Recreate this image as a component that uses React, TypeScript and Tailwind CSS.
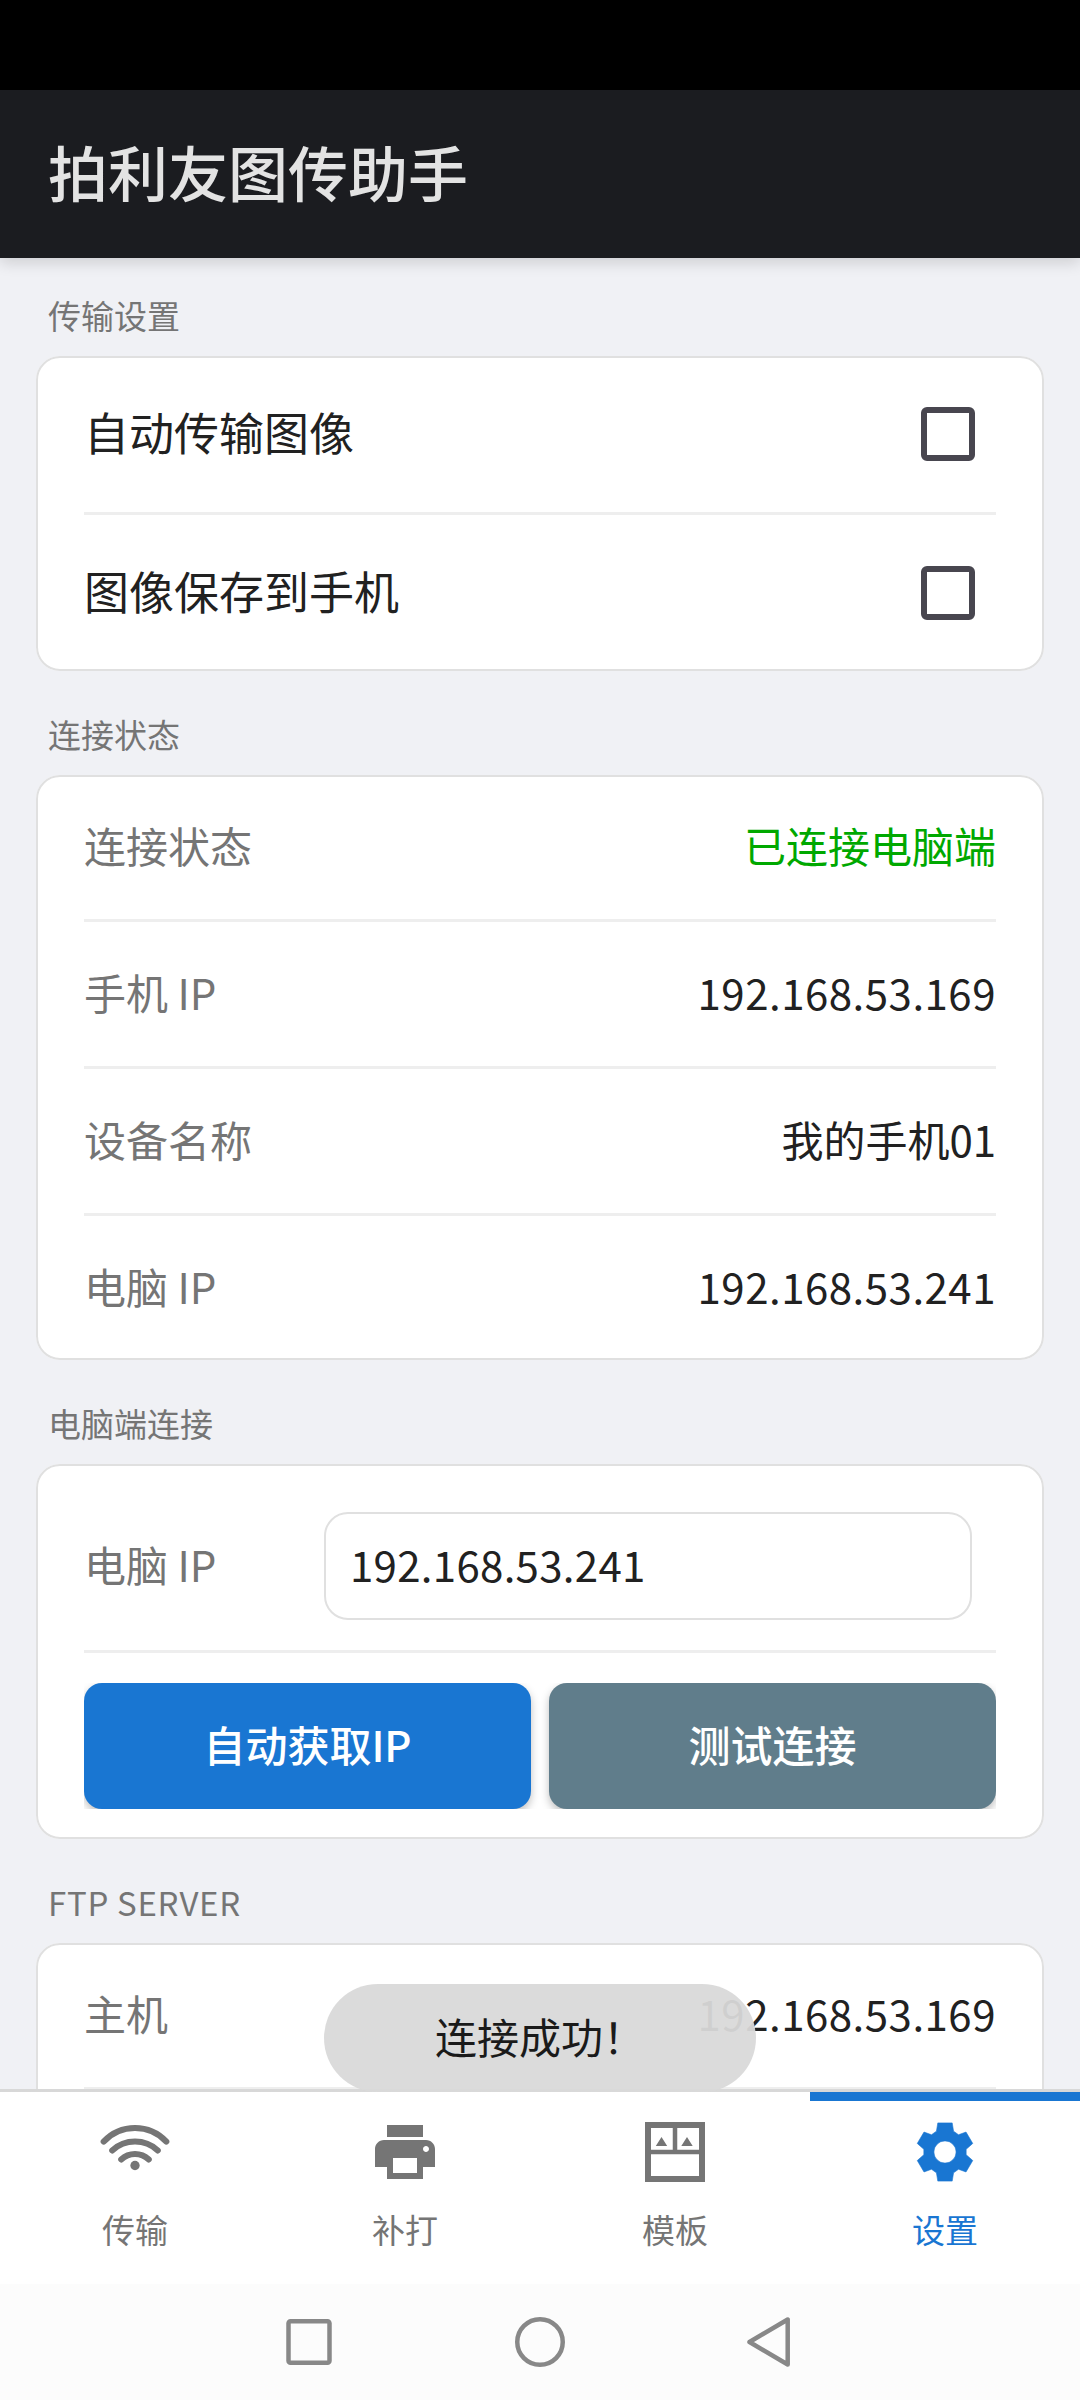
import React from 'react';

const WifiIcon = () => (
  <svg viewBox="0 0 24 24" className="w-[72px] h-[72px]" fill="none" stroke="currentColor" strokeWidth="2" strokeLinecap="round">
    <path d="M1.55 8.55C7.2 2.5 16.8 2.5 22.45 8.55" />
    <path d="M4.4 11.5C8.7 7.55 15.3 7.55 19.6 11.5" />
    <path d="M7.4 14.5C10 12.05 14 12.05 16.6 14.5" />
    <circle cx="12" cy="16.5" r="1.55" fill="currentColor" stroke="none" />
  </svg>
);

const PrintIcon = () => (
  <svg viewBox="0 0 24 24" className="w-[72px] h-[72px]" fill="currentColor">
    <path d="M19 8H5c-1.66 0-3 1.34-3 3v6h4v4h12v-4h4v-6c0-1.66-1.34-3-3-3zm-3 11H8v-5h8v5zm3-7c-.55 0-1-.45-1-1s.45-1 1-1 1 .45 1 1-.45 1-1 1zm-1-9H6v4h12V3z" />
  </svg>
);

const TemplateIcon = () => (
  <svg viewBox="0 0 24 24" className="w-[72px] h-[72px]" fill="currentColor">
    <path d="M2 2h20v20H2zM4 4v7.25h7.25V4zM12.75 4v7.25H20V4zM4 12.75V20h16v-7.25z" fillRule="evenodd" />
    <path d="M5.6 10l1.9-3 1.9 3zM14.1 10l1.9-3 1.9 3z" />
  </svg>
);

const SettingsIcon = () => (
  <svg viewBox="0 0 24 24" className="w-[72px] h-[72px]" fill="currentColor" stroke="currentColor" strokeWidth="0.2" strokeLinejoin="round">
    <path
      fillRule="evenodd"
      d="M9.6 2.3h4.8l.45 2.75 1.65 1.2 2.5-.9 2.25 3.8-2.2 1.95v1.8l2.2 1.95-2.25 3.8-2.5-.9-1.65 1.2-.45 2.75H9.6l-.45-2.75-1.65-1.2-2.5.9-2.25-3.8 2.2-1.95v-1.8l-2.2-1.95L5 5.35l2.5.9 1.65-1.2zM12 8.3a3.7 3.7 0 1 0 0 7.4 3.7 3.7 0 0 0 0-7.4z"
    />
  </svg>
);

const Divider = () => <div className="h-[3px] bg-[#eeeeee]"></div>;

const Section = ({ title, children }: { title: string; children: React.ReactNode }) => (
  <section>
    <h2 className="h-[104px] pt-[39px] pl-3 text-[33px] leading-[48px] text-[#757575]">{title}</h2>
    <div className="relative bg-white rounded-[24px] px-12 after:absolute after:inset-0 after:rounded-[24px] after:border-2 after:border-[#e0e0e0] after:pointer-events-none">
      {children}
    </div>
  </section>
);

const CheckRow = ({ label }: { label: string }) => (
  <div className="h-[156px] flex items-center justify-between pr-[21px]">
    <span className="pb-[5px] text-[45px] leading-none">{label}</span>
    <span className="w-[54px] h-[54px] rounded-[6px] border-6 border-[#48464f]"></span>
  </div>
);

const InfoRow = ({ label, value, valueClass = '' }: { label: string; value: string; valueClass?: string }) => (
  <div className="h-36 flex items-center justify-between pb-[5px] text-[42px] leading-none">
    <span className="text-[#757575]">{label}</span>
    <span className={valueClass}>{value}</span>
  </div>
);

const tabs = [
  { label: '传输', icon: <WifiIcon /> },
  { label: '补打', icon: <PrintIcon /> },
  { label: '模板', icon: <TemplateIcon /> },
  { label: '设置', icon: <SettingsIcon />, active: true },
];

const App = () => {
  return (
    <div className="w-[1080px] h-[2400px] flex flex-col overflow-hidden bg-[#f0f1f5] text-[#212121] font-['Noto_Sans_CJK_SC',sans-serif]">
      <div className="h-[90px] shrink-0 bg-black"></div>

      <header className="relative z-10 h-[168px] shrink-0 flex items-center px-12 pb-[6px] bg-[#1b1c20] shadow-[0_5px_14px_rgba(0,0,0,0.14)]">
        <h1 className="text-[60px] leading-none font-medium text-[#e3e3e3]">拍利友图传助手</h1>
      </header>

      <main className="relative flex-1 min-h-0">
        <div className="h-[1837px] overflow-hidden px-9 -mt-[6px]">
          <Section title="传输设置">
            <CheckRow label="自动传输图像" />
            <Divider />
            <CheckRow label="图像保存到手机" />
          </Section>

          <Section title="连接状态">
            <InfoRow label="连接状态" value="已连接电脑端" valueClass="text-[#00a800]" />
            <Divider />
            <InfoRow label="手机 IP" value="192.168.53.169" valueClass="tracking-[0.5px]" />
            <Divider />
            <InfoRow label="设备名称" value="我的手机01" />
            <Divider />
            <InfoRow label="电脑 IP" value="192.168.53.241" valueClass="tracking-[0.5px]" />
          </Section>

          <Section title="电脑端连接">
            <div className="flex items-center pt-12 pb-[30px] pr-6 text-[42px] leading-none">
              <span className="w-60 pb-[5px] text-[#757575]">电脑 IP</span>
              <div className="flex-1 h-[108px] flex items-center px-6 pb-[5px] rounded-[24px] border-2 border-[#e0e0e0] tracking-[0.3px]">
                192.168.53.241
              </div>
            </div>
            <Divider />
            <div className="py-[30px]">
              <div className="flex gap-[18px] overflow-hidden text-[42px] leading-none font-medium text-white">
                <button className="flex-1 h-[126px] pb-[4px] rounded-[18px] bg-[#1976d2] shadow-[0_4px_8px_rgba(0,0,0,0.25)]">自动获取IP</button>
                <button className="flex-1 h-[126px] pb-[4px] rounded-[18px] bg-[#607d8b] shadow-[0_4px_8px_rgba(0,0,0,0.25)]">测试连接</button>
              </div>
            </div>
          </Section>

          <div className="[&_h2]:tracking-[0.7px]">
            <Section title="FTP SERVER">
              <InfoRow label="主机" value="192.168.53.169" valueClass="tracking-[0.5px]" />
              <Divider />
              <div className="h-36"></div>
            </Section>
          </div>
        </div>

        {/* toast */}
        <div className="absolute z-20 left-[324px] -bottom-[3px] w-[432px] h-[108px] flex items-center justify-center pb-[4px] rounded-full bg-[#d9d9d9]/95 text-[42px] leading-none text-[#1a1a1a]">
          连接成功！
        </div>
      </main>

      <nav className="h-[195px] shrink-0 grid grid-cols-4 border-t-3 border-[#d8d8d8] bg-white">
        {tabs.map((tab) => (
          <div
            key={tab.label}
            className={`relative flex flex-col items-center pt-6 ${tab.active ? 'text-[#1976d2]' : 'text-[#757575]'}`}
          >
            {tab.active && <div className="absolute top-0 inset-x-0 h-[9px] bg-[#1976d2]"></div>}
            {tab.icon}
            <span className="mt-[17px] text-[33px] leading-[48px]">{tab.label}</span>
          </div>
        ))}
      </nav>

      {/* system navigation */}
      <div className="h-[116px] shrink-0 flex items-center justify-center bg-[#fcfcfc] text-[#888888]">
        <svg width="512" height="56" viewBox="0 0 512 56" fill="none" stroke="currentColor" strokeWidth="4.5" strokeLinejoin="round">
          <rect x="4.5" y="7.25" width="41" height="41.5" rx="2" />
          <circle cx="256" cy="28" r="22.75" />
          <path d="M465.5 28L503.7 5.5V50.5z" />
        </svg>
      </div>
    </div>
  );
};

export default App;
